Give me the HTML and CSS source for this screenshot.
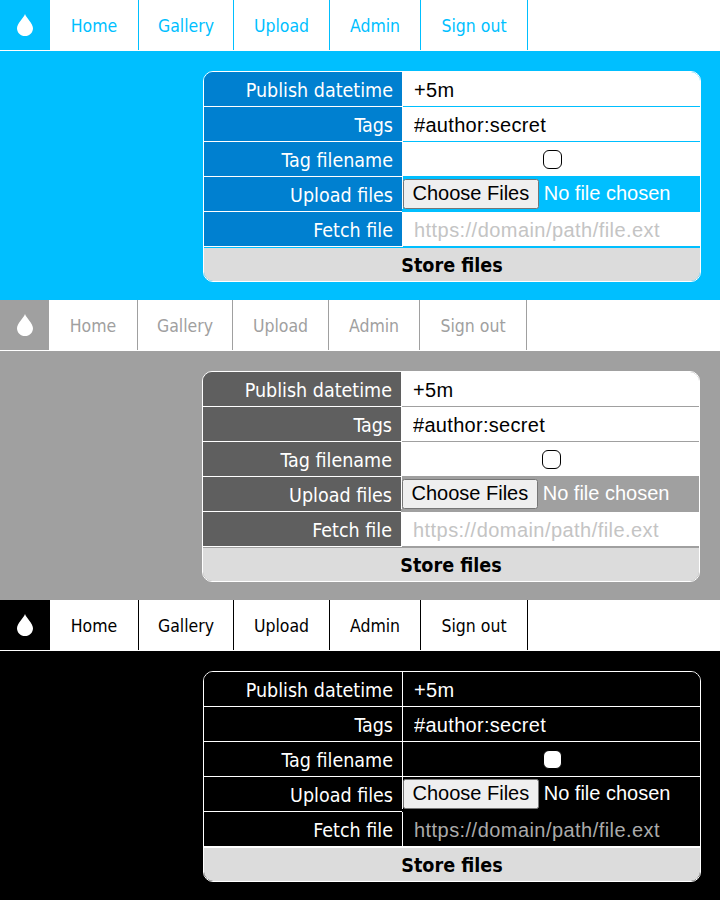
FILE: index.html
```html
<!DOCTYPE html>
<html lang="en">
<head>
<meta charset="utf-8">
<title>Upload</title>
<link rel="stylesheet" href="styles.css">
</head>
<body>
<section class="panel theme-blue">
  <nav class="nav">
    <a class="logo" href="#"><svg class="drop" viewBox="0 0 16 22"><path d="M8 0C7 3.500 0 9.500 0 14.200C0 18.600 3.500 22 8 22C12.500 22 16 18.600 16 14.200C16 9.500 9 3.500 8 0Z"/></svg></a>
    <a class="link link-home" href="#">Home</a><a class="link link-gallery" href="#">Gallery</a><a class="link link-upload" href="#">Upload</a><a class="link link-admin" href="#">Admin</a><a class="link link-signout" href="#">Sign out</a>
  </nav>
  <form class="card">
    <label class="key">Publish datetime</label><div class="val"><input class="text" type="text" value="+5m"></div>
    <label class="key">Tags</label><div class="val"><input class="text" type="text" value="#author:secret"></div>
    <label class="key">Tag filename</label><div class="val val-check"><input class="check" type="checkbox"></div>
    <label class="key">Upload files</label><div class="val val-file"><input class="file" type="file" multiple></div>
    <label class="key">Fetch file</label><div class="val"><input class="text" type="text" placeholder="https://domain/path/file.ext"></div>
    <button class="store" type="button">Store files</button>
  </form>
</section>
<section class="panel theme-gray">
  <nav class="nav">
    <a class="logo" href="#"><svg class="drop" viewBox="0 0 16 22"><path d="M8 0C7 3.500 0 9.500 0 14.200C0 18.600 3.500 22 8 22C12.500 22 16 18.600 16 14.200C16 9.500 9 3.500 8 0Z"/></svg></a>
    <a class="link link-home" href="#">Home</a><a class="link link-gallery" href="#">Gallery</a><a class="link link-upload" href="#">Upload</a><a class="link link-admin" href="#">Admin</a><a class="link link-signout" href="#">Sign out</a>
  </nav>
  <form class="card">
    <label class="key">Publish datetime</label><div class="val"><input class="text" type="text" value="+5m"></div>
    <label class="key">Tags</label><div class="val"><input class="text" type="text" value="#author:secret"></div>
    <label class="key">Tag filename</label><div class="val val-check"><input class="check" type="checkbox"></div>
    <label class="key">Upload files</label><div class="val val-file"><input class="file" type="file" multiple></div>
    <label class="key">Fetch file</label><div class="val"><input class="text" type="text" placeholder="https://domain/path/file.ext"></div>
    <button class="store" type="button">Store files</button>
  </form>
</section>
<section class="panel theme-black">
  <nav class="nav">
    <a class="logo" href="#"><svg class="drop" viewBox="0 0 16 22"><path d="M8 0C7 3.500 0 9.500 0 14.200C0 18.600 3.500 22 8 22C12.500 22 16 18.600 16 14.200C16 9.500 9 3.500 8 0Z"/></svg></a>
    <a class="link link-home" href="#">Home</a><a class="link link-gallery" href="#">Gallery</a><a class="link link-upload" href="#">Upload</a><a class="link link-admin" href="#">Admin</a><a class="link link-signout" href="#">Sign out</a>
  </nav>
  <form class="card">
    <label class="key">Publish datetime</label><div class="val"><input class="text" type="text" value="+5m"></div>
    <label class="key">Tags</label><div class="val"><input class="text" type="text" value="#author:secret"></div>
    <label class="key">Tag filename</label><div class="val val-check"><input class="check" type="checkbox"></div>
    <label class="key">Upload files</label><div class="val val-file"><input class="file" type="file" multiple></div>
    <label class="key">Fetch file</label><div class="val"><input class="text" type="text" placeholder="https://domain/path/file.ext"></div>
    <button class="store" type="button">Store files</button>
  </form>
</section>
</body>
</html>
```
FILE: styles.css
```css
* { box-sizing: border-box; }
html, body { margin: 0; padding: 0; }
body { width: 720px; height: 900px; overflow: hidden; font-family: "DejaVu Sans Condensed", "DejaVu Sans", sans-serif; }

.theme-blue { --bg: #00bfff; --key: #0080d0; --field: #fff; --ink: #000; --line: #00bfff; --nudge: 0px; }
.theme-gray { --bg: #a0a0a0; --key: #5f5f5f; --field: #fff; --ink: #000; --line: #a0a0a0; --nudge: 1px; }
.theme-black { --bg: #000; --key: #000; --field: #000; --ink: #fff; --line: #fff; --nudge: 0px; }

.panel { height: 300px; background: var(--bg); overflow: hidden; }

.nav { display: flex; height: 51px; background: #fff; border-bottom: 1px solid #fff; }
.theme-black .link { color: #000; border-color: #000; }
.logo { display: flex; align-items: center; justify-content: center; width: calc(50px - var(--nudge)); background: var(--bg); }
.drop { width: 16px; height: 22px; fill: #fff; }
.link { display: flex; align-items: center; justify-content: center; padding-top: 2px; color: var(--bg); border-right: 1px solid var(--bg); font-size: 17.5px; text-decoration: none; }
.link-home { width: 89px; }
.link-gallery { width: 95px; }
.link-upload { width: 96px; }
.link-admin { width: 91px; }
.link-signout { width: 107px; }

.card {
  display: grid;
  grid-template-columns: 199px minmax(0, 1fr);
  grid-template-rows: repeat(5, 35px) 34px;
  width: 498px;
  margin: 20px 0 0 calc(203px - var(--nudge));
  border: 1px solid #fff;
  border-radius: 10px;
  overflow: hidden;
}
.key {
  display: flex; align-items: center; justify-content: flex-end;
  padding: 2px 9px 0 0;
  background: var(--key);
  color: #fff;
  border-right: 1px solid #fff;
  border-bottom: 1px solid #fff;
  font-size: 19.5px;
}
.val { display: flex; align-items: center; min-width: 0; background: var(--field); border-bottom: 1px solid var(--line); }
.val-check { justify-content: center; }
.val-file { align-items: flex-start; margin-left: -1px; background: var(--bg); border-bottom: 0; color: #fff; }
.text {
  width: 100%; height: 100%;
  padding: 3px 11px 0;
  border: 0; outline: 0; background: transparent;
  color: var(--ink);
  font: 20px "Liberation Sans", Arial, sans-serif;
  letter-spacing: 0.3px;
}
.text::placeholder { color: #aaa; opacity: 1; letter-spacing: 0.45px; }
.theme-blue .text::placeholder, .theme-gray .text::placeholder { color: #c4c4c4; }
.check {
  appearance: none;
  width: 19px; height: 19px; margin: 0 0 0 1px;
  background: #fff;
  border: 1.5px solid #000;
  border-radius: 6px;
}
.file {
  width: 100%; height: 32px; min-width: 0;
  padding-top: 2px;
  border-left: 1px solid #fff;
  font: 20px "Liberation Sans", Arial, sans-serif; color: #fff;
}
.file::file-selector-button { height: 30px; margin-right: 5px; padding: 0 7.5px 2px; }
.store {
  grid-column: 1 / -1;
  border: 0; border-top: 1px solid var(--line);
  padding: 2px 0 0;
  background: #dcdcdc; color: #000;
  font: bold 19.6px "DejaVu Sans Condensed", "DejaVu Sans", sans-serif;
}
```
